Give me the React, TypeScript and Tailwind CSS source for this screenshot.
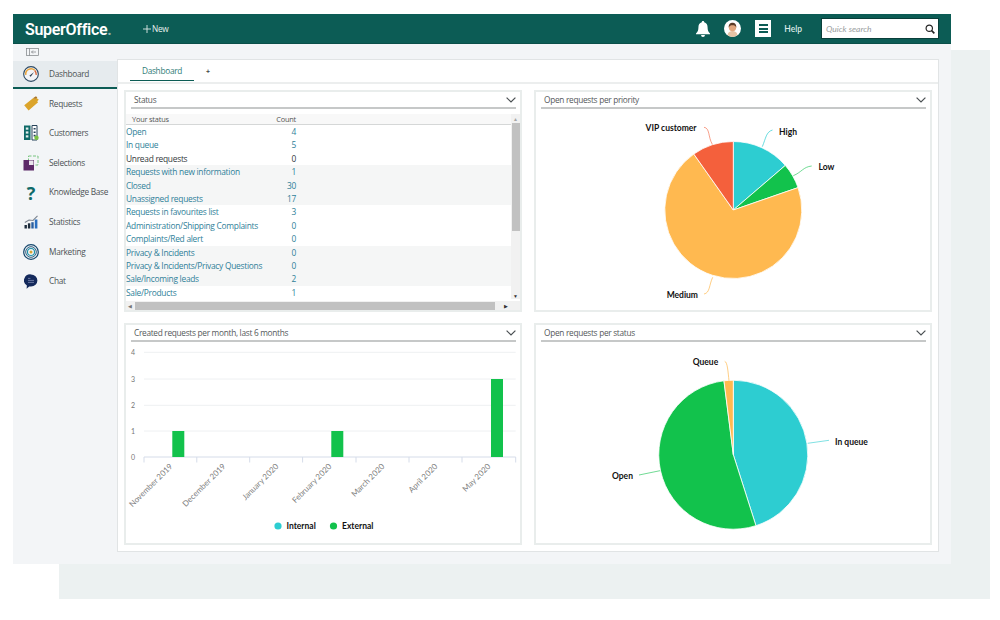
import React from "react";

function slice(cx: number, cy: number, r: number, a0: number, a1: number) {
  const p = (a: number) => {
    const t = (a * Math.PI) / 180;
    return `${(cx + r * Math.sin(t)).toFixed(2)} ${(cy - r * Math.cos(t)).toFixed(2)}`;
  };
  return `M${cx} ${cy}L${p(a0)}A${r} ${r} 0 ${a1 - a0 > 180 ? 1 : 0} 1 ${p(a1)}Z`;
}

const TEAL = "#2dcdd1";
const GREEN = "#12c24c";
const ORANGE = "#ffb950";
const RED = "#f4603c";

function Chevron() {
  return (
    <svg width="10" height="6" viewBox="0 0 10 6" fill="none" stroke="#4a4f52" strokeWidth="1.2" className="mt-[1px]">
      <path d="M.6.6 5 5 9.4.6" />
    </svg>
  );
}

function Panel({ title, lower, children }: { title: string; lower?: boolean; children: React.ReactNode }) {
  return (
    <div className="flex h-[222px] w-[398px] flex-col border-2 border-[#e9edec] bg-white">
      <div className="ml-[5px] mr-[4px] flex h-[17px] shrink-0 items-center justify-between border-b-2 border-[#c6c8c8] pl-[3px]">
        <span className={`${lower ? "pt-[2px]" : "pt-[1px]"} text-[8.3px] tracking-[-0.3px] text-[#55595b]`}>{title}</span>
        <Chevron />
      </div>
      {children}
    </div>
  );
}

const rows: [string, string, boolean?][] = [
  ["Open", "4"],
  ["In queue", "5"],
  ["Unread requests", "0", true],
  ["Requests with new information", "1"],
  ["Closed", "30"],
  ["Unassigned requests", "17"],
  ["Requests in favourites list", "3"],
  ["Administration/Shipping Complaints", "0"],
  ["Complaints/Red alert", "0"],
  ["Privacy & Incidents", "0"],
  ["Privacy & Incidents/Privacy Questions", "0"],
  ["Sale/Incoming leads", "2"],
  ["Sale/Products", "1"],
];

function StatusTable() {
  return (
    <div className="relative mt-[5px] flex min-h-0 flex-1 flex-col overflow-hidden">
      <div className="mr-[9px] flex h-[11px] shrink-0 items-center border-b border-[#d5d7d7] bg-[#f8f8f8] pl-[6px] pt-[1px] text-[7.4px] tracking-[-0.2px] text-[#555]">
        <span className="w-[144px]">Your status</span>
        <span className="w-[20px] text-right">Count</span>
      </div>
      <div className="mr-[9px]">
        {rows.map(([name, n, dark], i) => (
          <div
            key={name}
            className={`flex h-[13.42px] items-center pt-[1px] text-[8.4px] tracking-[-0.27px] ${Math.floor(i / 3) % 2 === 1 ? "bg-[#f5f6f6]" : "bg-white"} ${dark ? "text-[#33393c]" : "text-[#2f7f99]"}`}
          >
            <span className="w-[150px] whitespace-nowrap">{name}</span>
            <span className="w-[20px] text-right">{n}</span>
          </div>
        ))}
      </div>
      {/* vertical scrollbar */}
      <div className="absolute bottom-[11px] right-0 top-0 flex w-[9px] flex-col items-center bg-[#f1f1f1]">
        <span className="mt-[2px] text-[5px] leading-[6px] text-[#a5a5a5]">▲</span>
        <div className="mt-[1px] h-[108px] w-[8px] bg-[#c1c1c1]" />
        <span className="mt-auto text-[5px] leading-[6px] text-[#333]">▼</span>
      </div>
      {/* horizontal scrollbar */}
      <div className="absolute bottom-0 left-0 right-0 flex h-[9px] items-center bg-[#f1f1f1]">
        <span className="ml-[2px] w-[7px] text-[5px] leading-[6px] text-[#777]">◀</span>
        <div className="h-[8px] w-[360px] bg-[#c1c1c1]" />
        <span className="ml-auto mr-[12px] text-[5px] leading-[6px] text-[#333]">▶</span>
      </div>
    </div>
  );
}

const labelCls = "fill-[#111] text-[8.5px] font-bold";
const labelFont = { fontFamily: "Lato, sans-serif" } as const;

function PriorityPie() {
  const c = [733.3, 210, 68.5] as const;
  return (
    <svg className="block flex-1" viewBox="536 109 394 201" width="394" height="201">
      <g style={labelFont}>
        <path d={slice(...c, 0, 49.4)} fill={TEAL} stroke="#fff" strokeWidth=".8" />
        <path d={slice(...c, 49.4, 70.9)} fill={GREEN} stroke="#fff" strokeWidth=".8" />
        <path d={slice(...c, 70.9, 324.8)} fill={ORANGE} stroke="#fff" strokeWidth=".8" />
        <path d={slice(...c, 324.8, 360)} fill={RED} stroke="#fff" strokeWidth=".8" />
        <g fill="none" strokeWidth="1">
          <path d="M762.3 146.7C766 138 766 132 772.5 130" stroke={TEAL} strokeOpacity=".7" />
          <path d="M793.3 175.7C802 172 803 167 811.7 166" stroke={GREEN} strokeOpacity=".6" />
          <path d="M712.3 144.3C708 137 710 128 704 127.3" stroke={RED} strokeOpacity=".6" />
          <path d="M712.7 277.3C709 285 710 293 704 294" stroke={ORANGE} strokeOpacity=".7" />
        </g>
        <text x="779" y="135" className={labelCls}>High</text>
        <text x="818.5" y="170" className={labelCls}>Low</text>
        <text x="696.5" y="131" textAnchor="end" className={labelCls}>VIP customer</text>
        <text x="698" y="297.5" textAnchor="end" className={labelCls}>Medium</text>
      </g>
    </svg>
  );
}

function StatusPie() {
  const c = [733.3, 454.7, 74.5] as const;
  return (
    <svg className="block flex-1" viewBox="536 342 394 201" width="394" height="201">
      <g style={labelFont}>
        <path d={slice(...c, 0, 162.3)} fill={TEAL} stroke="#fff" strokeWidth=".8" />
        <path d={slice(...c, 162.3, 352.8)} fill={GREEN} stroke="#fff" strokeWidth=".8" />
        <path d={slice(...c, 352.8, 360)} fill={ORANGE} stroke="#fff" strokeWidth=".8" />
        <g fill="none" strokeWidth="1">
          <path d="M729 380.7C728 372 727.5 362 724.7 361.3" stroke={ORANGE} strokeOpacity=".7" />
          <path d="M807.7 443.3 829 440.3" stroke={TEAL} strokeOpacity=".6" />
          <path d="M660 470.7 639 475" stroke={GREEN} strokeOpacity=".6" />
        </g>
        <text x="692.7" y="365" className={labelCls}>Queue</text>
        <text x="835" y="444.7" className={labelCls}>In queue</text>
        <text x="612" y="479" className={labelCls}>Open</text>
      </g>
    </svg>
  );
}

function BarChart() {
  const months = ["November 2019", "December 2019", "January 2020", "February 2020", "March 2020", "April 2020", "May 2020"];
  const ticks = [144, 196.8, 249.7, 302.6, 356, 409, 462, 515.7];
  const grid: [string, number][] = [["4", 352.3], ["3", 379], ["2", 405.3], ["1", 431], ["0", 457]];
  const ends = [173, 226, 279, 332, 385, 438, 491];
  return (
    <svg className="block flex-1" viewBox="126 342 394 201" width="394" height="201">
      <g style={labelFont}>
        {grid.map(([l, y]) => (
          <g key={l}>
            {l !== "0" && <path d={`M144 ${y}H515.7`} stroke="#eef0f2" strokeWidth="1" />}
            <text x="133" y={y + 2.6} fontSize="7" fill="#777" textAnchor="middle">{l}</text>
          </g>
        ))}
        <path d="M144 457H515.7" stroke="#d5dce9" strokeWidth="1" />
        {ticks.map((x) => (
          <path key={x} d={`M${x} 457v5.5`} stroke="#d5dce9" strokeWidth="1" />
        ))}
        <rect x="172.3" y="431" width="12" height="26" fill={GREEN} />
        <rect x="331.3" y="431" width="12" height="26" fill={GREEN} />
        <rect x="491" y="379" width="12" height="78" fill={GREEN} />
        {months.map((m, i) => (
          <text
            key={m}
            transform={`translate(${ends[i]} 467) rotate(-45)`}
            textAnchor="end"
            fontSize="8"
            fill="#808080"
          >
            {m}
          </text>
        ))}
        <circle cx="278" cy="526" r="3.6" fill={TEAL} />
        <text x="286.5" y="529" className={labelCls}>Internal</text>
        <circle cx="333.5" cy="526" r="3.6" fill={GREEN} />
        <text x="342" y="529" className={labelCls}>External</text>
      </g>
    </svg>
  );
}

/* ---- sidebar icons ---- */
const Gauge = () => (
  <svg width="16" height="16" viewBox="0 0 17 17">
    <circle cx="8.5" cy="8.5" r="7.8" fill="#f3f4f7" stroke="#2d4a63" strokeWidth="1.2" />
    <path d="M3 9.5A5.6 5.6 0 0 1 12.5 4.6" fill="none" stroke="#e8a33a" strokeWidth="1.6" />
    <path d="M12.5 4.8A5.6 5.6 0 0 1 14 9.5" fill="none" stroke="#d9683a" strokeWidth="1.6" />
    <path d="M6.8 10.4 11.8 6.4 8.2 11.4Z" fill="#2c3e50" />
  </svg>
);
const Ticket = () => (
  <svg width="15" height="15" viewBox="0 0 15 15">
    <path d="M.2 9.2 9.6 1.8l.9 1.3 1.5-1.700 2.800 2.400-1.600 1.500.9 1L4.600 14.600Z" fill="#dba42b" />
    <path d="M9.600 1.800 12 .2l1.400 1.600-2.900 1.300Z" fill="#a9762a" />
  </svg>
);
const Building = () => (
  <svg width="15" height="16" viewBox="0 0 15 16">
    <rect x="0" y="0.5" width="6.5" height="14.5" fill="#0f6a68" />
    <rect x="1.8" y="2.5" width="2.6" height="2.2" fill="#e5eeee" />
    <rect x="1.8" y="6.4" width="2.6" height="2.2" fill="#e5eeee" />
    <rect x="1.8" y="10.3" width="2.6" height="2.2" fill="#e5eeee" />
    <path d="M8 .5h5V15H8z" fill="#fff" stroke="#27435a" strokeWidth="1" />
    <path d="M9.6 3h2v1.600h-2zM9.600 6.400h2V8h-2zM9.600 9.800h2v1.600h-2z" fill="#27435a" />
    <circle cx="12.5" cy="12.8" r="2.2" fill="#7ac143" />
  </svg>
);
const Selections = () => (
  <svg width="16" height="16" viewBox="0 0 16 16">
    <rect x="5.5" y="1" width="9.5" height="9" fill="none" stroke="#6cbf73" strokeWidth=".9" strokeDasharray="3 1.5" />
    <rect x="0.5" y="5" width="10.5" height="10.5" fill="#5d2a68" />
    <rect x="6" y="5.5" width="4.5" height="4.5" fill="#e9e3ec" />
  </svg>
);
const Stats = () => (
  <svg width="15" height="14" viewBox="0 0 15 14">
    <path d="M.8 7.5 5 5 9 5.5 13.5.8" fill="none" stroke="#7d8590" strokeWidth="1.1" />
    <rect x="0.5" y="10" width="2.4" height="3.5" fill="#1e2d3d" />
    <rect x="3.9" y="8.3" width="2.4" height="5.2" fill="#1e2d3d" />
    <rect x="7.3" y="7.2" width="2.4" height="6.3" fill="#2a5e9e" />
    <rect x="10.8" y="4.5" width="2.6" height="9" fill="#2a6fc0" />
  </svg>
);
const Target = () => (
  <svg width="16" height="16" viewBox="0 0 16 16" fill="none">
    <circle cx="8" cy="8" r="7.3" stroke="#15486e" strokeWidth="1.2" />
    <circle cx="8" cy="8" r="5.3" stroke="#15486e" strokeWidth=".9" />
    <circle cx="8" cy="8" r="3.5" stroke="#1a8fa8" strokeWidth="1.1" />
    <circle cx="8" cy="8" r="1.5" fill="#d8a32f" />
  </svg>
);
const Chat = () => (
  <svg width="14" height="15" viewBox="0 0 14 15">
    <path d="M7 .4a6.4 6 0 0 1 0 12H5.2L2.6 14.8l.3-3.400A6.400 6 0 0 1 7 .4Z" fill="#142a5c" />
    <path d="M4 4.400h2.400M4 6.400h6M4 8.400h6" stroke="#8f9bc0" strokeWidth=".7" />
  </svg>
);

const nav: [string, React.ReactNode][] = [
  ["Requests", <Ticket />],
  ["Customers", <Building />],
  ["Selections", <Selections />],
  ["Knowledge Base", <span className="text-[18px] font-bold leading-none text-[#0f6a68]">?</span>],
  ["Statistics", <Stats />],
  ["Marketing", <Target />],
  ["Chat", <Chat />],
];

function NavRow({ label, icon }: { label: string; icon: React.ReactNode }) {
  return (
    <div className="flex h-[29.6px] items-center">
      <div className="flex w-[36px] shrink-0 justify-center">{icon}</div>
      <span className="text-[8.3px] tracking-[-0.3px] text-[#4c5254]">{label}</span>
    </div>
  );
}

export default function App() {
  return (
    <div
      className="grid h-[620px] w-[1000px] overflow-hidden bg-white"
      style={{ fontFamily: '"Open Sans", "Noto Sans", sans-serif' }}
    >
      <div className="ml-[59px] mt-[50px] h-[549px] w-[931px] bg-[#ecf1f1] [grid-area:1/1]" />
      <div className="z-10 ml-[13px] mt-[14px] flex h-[550px] w-[938px] flex-col bg-[#f3f5f7] [grid-area:1/1]">
        {/* header */}
        <header className="flex h-[30px] shrink-0 items-center border-b border-[#0a4f49] bg-[#0c5c55] text-white">
          <span className="ml-[12px] w-[106px] pt-[2px] text-[16px] font-semibold leading-none tracking-[-0.3px]" style={{ fontFamily: "Roboto, sans-serif" }}>
            SuperOffice<span className="text-[#8fb5b0]">.</span>
          </span>
          <svg width="8" height="8" viewBox="0 0 8 8" stroke="#dfe9e7" strokeWidth=".9" className="ml-[12px] mt-[1px]">
            <path d="M4 0v8M0 4h8" />
          </svg>
          <span className="ml-[1px] pt-[1px] text-[8.3px] tracking-[-0.3px] text-[#e7efed]">New</span>
          <div className="ml-auto flex items-center">
            <svg width="14" height="16" viewBox="0 0 15 17" fill="#fff">
              <path d="M7.5 0c.8 0 1.3.5 1.3 1.3C11.2 2 12.4 4 12.4 6.6c0 3.4.8 5 2.6 6.6v.8H0v-.8c1.8-1.6 2.6-3.2 2.6-6.6C2.600 4 3.800 2 6.200 1.300 6.200.5 6.700 0 7.500 0Z" />
              <path d="M5.400 15h4.200a2.100 2 0 0 1-4.200 0Z" />
            </svg>
            <svg width="17" height="17" viewBox="0 0 17 17" className="ml-[14px]">
              <circle cx="8.5" cy="8.5" r="8.5" fill="#fff" />
              <path d="M3.500 15c.5-3 2.500-4 5-4s4.500 1 5 4a8 8 0 0 1-10 0Z" fill="#e6c3a5" />
              <circle cx="8.5" cy="7.5" r="3.7" fill="#e2a77f" />
              <path d="M4.700 7.500C4.500 4 6.500 2.800 8.500 2.800s4 1.200 3.800 4.700C11.500 5.800 10.500 5.300 8.500 5.300s-3 .5-3.800 2.200Z" fill="#5b3a26" />
            </svg>
            <div className="ml-[14px] flex h-[17px] w-[16px] flex-col items-center justify-center gap-[1.5px] bg-white">
              <span className="h-[2px] w-[9px] bg-[#0c5c55]" />
              <span className="h-[2px] w-[9px] bg-[#0c5c55]" />
              <span className="h-[2px] w-[9px] bg-[#0c5c55]" />
            </div>
            <span className="ml-[13px] pt-[1px] text-[8.5px] font-semibold text-[#dbe9e7]" style={{ fontFamily: "Lato, sans-serif" }}>Help</span>
            <div className="ml-[19px] mr-[12px] flex h-[21px] w-[118px] items-center justify-between border border-[#0a3f3a] bg-white pl-[4px] pr-[3px]">
              <span className="pt-[1px] text-[8.5px] italic text-[#9a9ea0]" style={{ fontFamily: "Lato, sans-serif" }}>Quick search</span>
              <svg width="10" height="10" viewBox="0 0 11 11" fill="none" stroke="#222" strokeWidth="1.3">
                <circle cx="4.7" cy="4.7" r="3.5" />
                <path d="m7.300 7.300 3 3" strokeWidth="1.8" />
              </svg>
            </div>
          </div>
        </header>

        {/* collapse row */}
        <div className="flex h-[15px] shrink-0 items-center pl-[13px]">
          <svg width="13" height="8" viewBox="0 0 13 8" fill="none" stroke="#7b8083" strokeWidth=".7">
            <rect x=".4" y=".4" width="12.2" height="7.2" />
            <path d="M3.500 .4v7.200M10 4H5.500M7 2.500 5.500 4 7 5.500" />
          </svg>
        </div>

        <div className="flex min-h-0 flex-1">
          {/* sidebar */}
          <nav className="mt-[2px] w-[104px] shrink-0">
            <div className="flex h-[28px] items-center border-b-2 border-[#0c5c55] bg-[#e6ebee]">
              <div className="flex w-[36px] shrink-0 justify-center"><Gauge /></div>
              <span className="pt-[1px] text-[8.3px] tracking-[-0.3px] text-[#4c5254]">Dashboard</span>
            </div>
            {nav.map(([l, ic]) => (
              <NavRow key={l} label={l} icon={ic} />
            ))}
          </nav>

          {/* main card */}
          <main className="flex h-[493px] w-[822px] flex-col border border-[#e1e4e5] bg-white">
            <div className="flex h-[24px] shrink-0 border-b-2 border-[#eceeee] pl-[12px]">
              <div className="flex h-[21px] w-[64px] items-center justify-center border-b border-[#0c5c55] pt-[3px] text-[8.3px] tracking-[-0.3px] text-[#2f7d78]">
                Dashboard
              </div>
              <span className="ml-[12px] mt-[6px] text-[7px] font-bold leading-[12px] text-[#444]">+</span>
            </div>
            <div className="grid grid-cols-[398px_398px] gap-x-[12px] gap-y-[11px] pl-[6px] pt-[6px]">
              <Panel title="Status"><StatusTable /></Panel>
              <Panel title="Open requests per priority"><PriorityPie /></Panel>
              <Panel lower title="Created requests per month, last 6 months"><BarChart /></Panel>
              <Panel lower title="Open requests per status"><StatusPie /></Panel>
            </div>
          </main>
        </div>
      </div>
    </div>
  );
}
